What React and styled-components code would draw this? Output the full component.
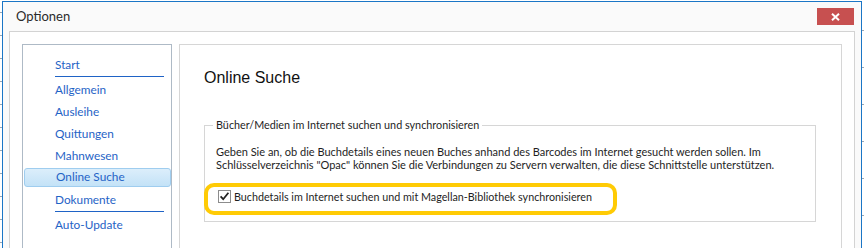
import React from "react";
import styled, { createGlobalStyle } from "styled-components";

const GlobalStyle = createGlobalStyle`
  html, body { margin: 0; padding: 0; background: #ffffff; overflow: hidden; }
  #root { width: 864px; height: 248px; }
`;

const Screen = styled.div`
  display: flex;
  width: 864px;
  height: 248px;
  overflow: hidden;
  background: #ffffff;
`;

const BackStrip = styled.div`
  flex: 0 0 2px;
  background-image: repeating-linear-gradient(
    to bottom,
    transparent 0px,
    transparent ${(p) => p.$offset}px,
    #9aa6b2 ${(p) => p.$offset}px,
    #9aa6b2 ${(p) => p.$offset + 1}px,
    transparent ${(p) => p.$offset + 1}px,
    transparent ${(p) => p.$step}px
  );
`;

const Window = styled.div`
  flex: 1;
  margin-top: 1px;
  display: flex;
  flex-direction: column;
  border: 1px solid #1b76c6;
  border-bottom: none;
  background: #fafafa;
  min-width: 0;
`;

const TitleBar = styled.div`
  height: 29px;
  flex: 0 0 29px;
  display: flex;
  align-items: flex-start;
  justify-content: space-between;
  padding: 0 7px 0 13px;
`;

const Title = styled.span`
  font-family: "Lato", "Liberation Sans", sans-serif;
  font-size: 13px;
  line-height: 28px;
  color: #2b2b2b;
`;

const CloseButton = styled.div`
  margin-top: 6px;
  width: 37px;
  height: 17px;
  background: #c75050;
  display: flex;
  align-items: center;
  justify-content: center;
`;

const Frame = styled.div`
  flex: 1;
  margin: 0 6px;
  border: 1px solid #d3d3d3;
  border-bottom: none;
  background: #ffffff;
  padding: 12px 12px 0;
  display: flex;
  gap: 7px;
`;

const Nav = styled.nav`
  flex: 0 0 150px;
  box-sizing: border-box;
  border: 1px solid #aebac6;
  border-bottom: none;
  padding: 9px 0 0 0;
  display: flex;
  flex-direction: column;
`;

const NavItem = styled.div`
  height: 22px;
  display: flex;
  align-items: center;
  position: relative;
  padding-left: 32px;
  font-family: "Lato", "Liberation Sans", sans-serif;
  font-size: 11.8px;
  color: #1f63c6;
`;

const ActiveBox = styled.div`
  position: absolute;
  left: 1px;
  right: 0;
  top: 1px;
  height: 17px;
  border: 1px solid #9fcdef;
  border-radius: 3px;
  background: linear-gradient(to bottom, #dceefb, #c3e2f7);
  z-index: 0;
`;

const NavLabel = styled.span`
  position: relative;
  z-index: 1;
  line-height: 22px;
  transform: translateY(${(p) => (p.$active ? -1 : 0)}px);
  padding-left: ${(p) => (p.$active ? 1 : 0)}px;
`;

const NavRule = styled.div`
  height: 1px;
  margin: 0 7px 2px 32px;
  background: #1f63c6;
`;

const Content = styled.section`
  flex: 1;
  min-width: 0;
  border: 1px solid #d6d6d6;
  border-bottom: none;
  padding: 24px 25px 0 24px;
`;

const Heading = styled.h1`
  margin: 0 0 31px 0;
  font-family: "Liberation Sans", Arial, sans-serif;
  font-weight: normal;
  font-size: 16px;
  line-height: 18px;
  color: #111111;
`;

const GroupBox = styled.fieldset`
  margin: 0;
  border: 1px solid #d6d6d6;
  padding: 0 11px 16px 11px;
  min-width: 0;
`;

const Legend = styled.legend`
  margin-left: -3px;
  padding: 0 3px;
  font-family: "Lato", "Liberation Sans", sans-serif;
  font-size: 10.8px;
  line-height: 14px;
  color: #1e1e1e;
`;

const Description = styled.p`
  margin: 13px 0 0 0;
  font-family: "Lato", "Liberation Sans", sans-serif;
  font-size: 11px;
  line-height: 13px;
  color: #1e1e1e;
`;

const CheckRow = styled.label`
  position: relative;
  display: flex;
  align-items: center;
  height: 16px;
  margin-top: 18px;
  padding-left: 2px;
  font-family: "Lato", "Liberation Sans", sans-serif;
  font-size: 10.75px;
  color: #1e1e1e;
`;

const Highlight = styled.span`
  position: absolute;
  left: -12px;
  top: -6px;
  width: 413px;
  height: 32px;
  box-sizing: border-box;
  border: 4px solid #ffcb05;
  border-radius: 10px;
  pointer-events: none;
`;

const CheckBox = styled.span`
  width: 13px;
  height: 13px;
  box-sizing: border-box;
  border: 1px solid #8c8c8c;
  background: #ffffff;
  display: flex;
  align-items: center;
  justify-content: center;
  margin-right: 3px;
  margin-top: -2px;
`;

const CheckLabel = styled.span`
  line-height: 16px;
`;

const navItems = [
  { label: "Start" },
  { rule: true },
  { label: "Allgemein" },
  { label: "Ausleihe" },
  { label: "Quittungen" },
  { label: "Mahnwesen" },
  { label: "Online Suche", active: true },
  { label: "Dokumente" },
  { rule: true },
  { label: "Auto-Update" },
];

export default function App() {
  return (
    <>
      <GlobalStyle />
      <Screen>
        <BackStrip $offset={12} $step={23} />
        <Window>
          <TitleBar>
            <Title>Optionen</Title>
            <CloseButton>
              <svg width="9" height="8" viewBox="0 0 9 8">
                <path d="M1 0.8 L8 7.2 M8 0.8 L1 7.2" stroke="#ffffff" strokeWidth="2" />
              </svg>
            </CloseButton>
          </TitleBar>
          <Frame>
            <Nav>
              {navItems.map((item, i) =>
                item.rule ? (
                  <NavRule key={i} />
                ) : (
                  <NavItem key={i} $active={item.active}>
                    {item.active && <ActiveBox />}
                    <NavLabel $active={item.active}>{item.label}</NavLabel>
                  </NavItem>
                )
              )}
            </Nav>
            <Content>
              <Heading>Online Suche</Heading>
              <GroupBox>
                <Legend>Bücher/Medien im Internet suchen und synchronisieren</Legend>
                <Description>
                  Geben Sie an, ob die Buchdetails eines neuen Buches anhand des Barcodes im Internet gesucht werden sollen. Im
                  <br />
                  Schlüsselverzeichnis "Opac" können Sie die Verbindungen zu Servern verwalten, die diese Schnittstelle unterstützen.
                </Description>
                <CheckRow>
                  <Highlight />
                  <CheckBox>
                    <svg width="11" height="11" viewBox="0 0 11 11">
                      <path d="M1.6 5.4 L4.2 8.2 L9.4 1.8" fill="none" stroke="#222222" strokeWidth="1.8" />
                    </svg>
                  </CheckBox>
                  <CheckLabel>Buchdetails im Internet suchen und mit Magellan-Bibliothek synchronisieren</CheckLabel>
                </CheckRow>
              </GroupBox>
            </Content>
          </Frame>
        </Window>
        <BackStrip $offset={30} $step={37} />
      </Screen>
    </>
  );
}
